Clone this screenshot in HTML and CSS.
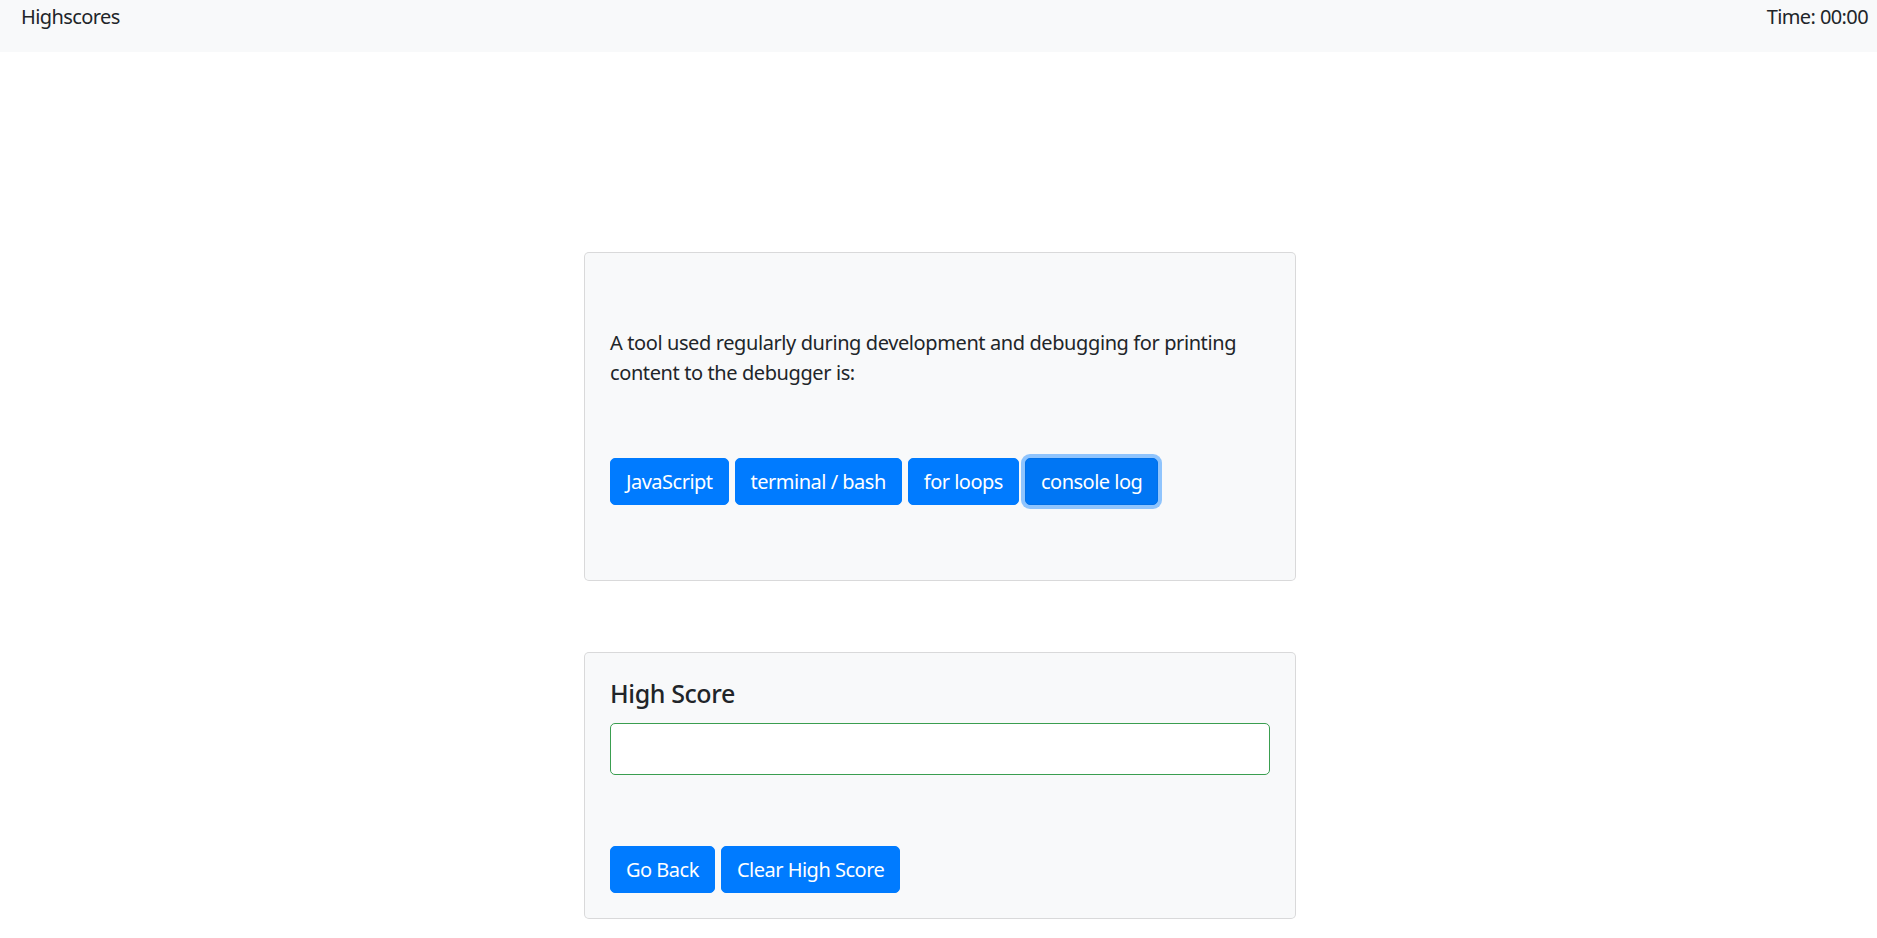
FILE: index.html
```html
<!DOCTYPE html>
<html lang="en">
<head>
<meta charset="utf-8">
<title>Code Quiz</title>
<link rel="stylesheet" href="styles.css">
</head>
<body>
<nav class="navbar">
  <a class="nav-link" href="#">Highscores</a>
  <span class="timer">Time: 00:00</span>
</nav>
<main class="main">
  <section class="card quiz-card">
    <p class="question">A tool used regularly during development and debugging for printing content to the debugger is:</p>
    <div class="choices">
      <button class="btn">JavaScript</button>
      <button class="btn">terminal / bash</button>
      <button class="btn">for loops</button>
      <button class="btn btn-focus">console log</button>
    </div>
  </section>
  <section class="card score-card">
    <h5 class="score-title">High Score</h5>
    <input class="score-input" type="text">
    <div class="actions">
      <button class="btn">Go Back</button>
      <button class="btn">Clear High Score</button>
    </div>
  </section>
</main>
</body>
</html>
```

FILE: styles.css
```css
* { box-sizing: border-box; }

body {
  margin: 0;
  background: #ffffff;
  color: #212529;
  font-family: "Noto Sans", "Open Sans", sans-serif;
  font-size: 20px;
  line-height: 30px;
}

.navbar {
  height: 52px;
  background: #f8f9fa;
  display: flex;
  justify-content: space-between;
  align-items: flex-start;
  padding: 2px 9px 0 21px;
  letter-spacing: -0.6px;
}

.nav-link {
  color: #212529;
  text-decoration: none;
}

.timer {
  color: #212529;
}

.main {
  display: flex;
  flex-direction: column;
  align-items: center;
  padding: 200px 0 0 3px;
}

.card {
  width: 712px;
  background: #f8f9fa;
  border: 1px solid rgba(0, 0, 0, 0.125);
  border-radius: 5px;
}

.quiz-card {
  padding: 75px 25px 75px;
}

.question {
  margin: 0 0 70px;
  letter-spacing: -0.4px;
}

.choices, .actions {
  display: flex;
  gap: 6px;
}

.btn {
  font-family: inherit;
  font-size: 20px;
  line-height: 30px;
  color: #ffffff;
  background: #007bff;
  border: 1px solid #007bff;
  border-radius: 5px;
  padding: 7.5px 15px;
  letter-spacing: -0.5px;
  cursor: pointer;
}

.btn-focus {
  background: #0076f4;
  border-color: #0070e8;
  box-shadow: 0 0 0 4px rgba(38, 143, 255, 0.5);
}

.score-card {
  margin-top: 71px;
  padding: 25px;
}

.score-title {
  margin: 0 0 15px;
  font-size: 25px;
  font-weight: 500;
  line-height: 30px;
  letter-spacing: -0.4px;
}

.score-input {
  display: block;
  width: 100%;
  height: 52px;
  background: #ffffff;
  border: 1px solid #3a9e50;
  border-radius: 5px;
  margin: 0 0 71px;
  font-family: inherit;
  font-size: 20px;
}
```
